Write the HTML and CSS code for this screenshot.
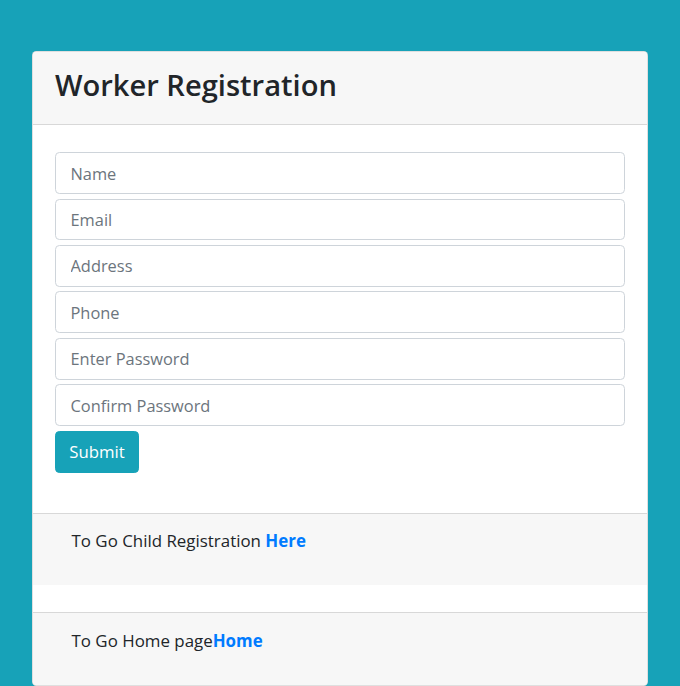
FILE: index.html
```html
<!DOCTYPE html>
<html lang="en">
<head>
<meta charset="utf-8">
<title>Worker Registration</title>
<link rel="stylesheet" href="styles.css">
</head>
<body>
<div class="card">
  <div class="card-header">
    <h3 class="title">Worker Registration</h3>
  </div>
  <div class="card-body">
    <form class="form">
      <input class="form-control" type="text" placeholder="Name">
      <input class="form-control" type="email" placeholder="Email">
      <input class="form-control" type="text" placeholder="Address">
      <input class="form-control" type="text" placeholder="Phone">
      <input class="form-control" type="password" placeholder="Enter Password">
      <input class="form-control" type="password" placeholder="Confirm Password">
      <button class="btn" type="button">Submit</button>
    </form>
  </div>
  <div class="card-footer">
    <div class="container">
      <p class="note">To Go Child Registration <a class="link" href="#">Here</a></p>
    </div>
  </div>
  <div class="spacer"></div>
  <div class="card-footer last">
    <div class="container">
      <p class="note">To Go Home page<a class="link" href="#">Home</a></p>
    </div>
  </div>
</div>
</body>
</html>
```

FILE: styles.css
```css
html, body {
  margin: 0;
  padding: 0;
}
body {
  background: #17a2b8;
  font-family: "Open Sans", "Noto Sans", sans-serif;
  color: #212529;
  font-size: 16.4px;
  line-height: 26.4px;
  overflow: hidden;
}
.card {
  width: 616px;
  box-sizing: border-box;
  margin: 51px auto 0;
  background: #fff;
  border: 1px solid rgba(0,0,0,.125);
  border-radius: 4.4px;
  overflow: hidden;
}
.card-header {
  background: #f7f7f7;
  border-bottom: 1px solid rgba(0,0,0,.125);
  padding: 15px 22px 11.4px;
}
.title {
  margin: 0 0 8.8px;
  font-size: 29.1px;
  line-height: 37px;
  font-weight: 600;
  color: #212529;
}
.card-body {
  padding: 22px;
}
.form {
  margin: 5px 0 18px;
  display: flex;
  flex-direction: column;
  align-items: flex-start;
  gap: 4.6px;
}
.form-control {
  box-sizing: border-box;
  width: 100%;
  height: 41.8px;
  margin: 0;
  padding: 6.6px 14.5px;
  border: 1px solid #ced4da;
  border-radius: 4.4px;
  font-family: inherit;
  font-size: 16.4px;
  color: #495057;
  background: #fff;
  outline: none;
}
.form-control::placeholder {
  color: #6c757d;
  opacity: 1;
}
.btn {
  box-sizing: border-box;
  height: 42px;
  padding: 0 13.2px;
  border: 1px solid #17a2b8;
  border-radius: 4.4px;
  background: #17a2b8;
  color: #fff;
  font-family: inherit;
  font-size: 16.8px;
  cursor: pointer;
}
.card-footer {
  background: #f7f7f7;
  border-top: 1px solid rgba(0,0,0,.125);
  padding: 13.6px 22px;
  font-size: 16.9px;
}
.container {
  padding: 0 16.5px;
}
.note {
  margin: 0 0 17.6px;
  line-height: 27px;
}
.link {
  color: #007bff;
  font-weight: 700;
  text-decoration: none;
}
.spacer {
  height: 26.6px;
  background: #fff;
}
```
